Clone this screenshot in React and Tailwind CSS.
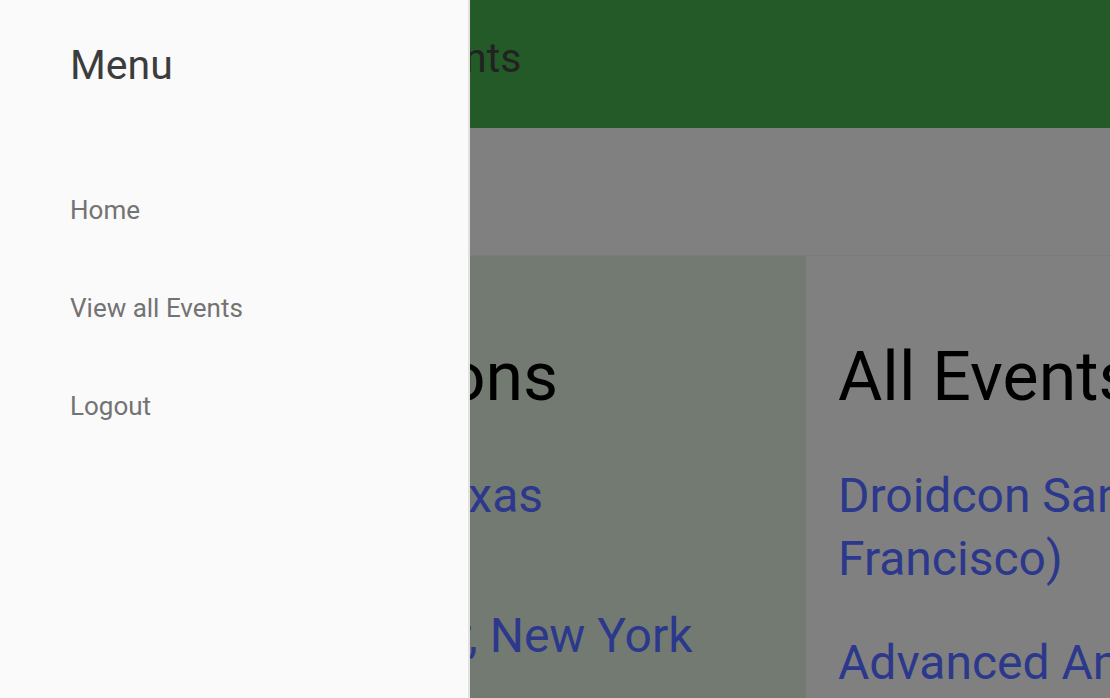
import React from 'react';

const font = { fontFamily: 'Roboto, "Noto Sans", sans-serif' };

function Drawer() {
  return (
    <aside className="absolute inset-y-0 left-0 z-20 w-[470px] bg-[#fafafa] border-r-2 border-[#e2e2e2]">
      <h2 className="pl-[70px] pt-[39px] text-[41px] leading-[52px] text-[#3c3c3c]">Menu</h2>
      <nav className="mt-[102px] flex flex-col gap-[64px] pl-[70px] text-[26px] leading-[34px] text-[#737373]">
        <a>Home</a>
        <a>View all Events</a>
        <a>Logout</a>
      </nav>
    </aside>
  );
}

export default function App() {
  return (
    <div className="relative h-[698px] w-[1110px] overflow-hidden bg-[#808080]" style={font}>
      <header className="h-[128px] bg-[#235a27] pl-[400px] pt-[32px]">
        <h1 className="text-[41px] leading-[52px] text-[#222]">Events</h1>
      </header>
      <div className="h-[128px] border-b border-[#7a7a7a] bg-[#808080]" />
      <main className="flex h-[442px]">
        <section className="w-[806px] shrink-0 bg-[#727a72] pl-[260px] pt-[81px] whitespace-nowrap">
          <h2 className="text-[68px] leading-[80px] text-black">Locations</h2>
          <ul className="mt-[47px] flex flex-col gap-[77px] text-[48px] leading-[63px] text-[#2c388c]">
            <li>Austin, Texas</li>
            <li className="-ml-[5px]">Rochester, New York</li>
          </ul>
        </section>
        <section className="flex-1 bg-[#808080] pl-[32px] pt-[81px] whitespace-nowrap">
          <h2 className="text-[68px] leading-[80px] text-black">All Events</h2>
          <ul className="mt-[47px] flex flex-col gap-[41px] text-[48px] leading-[63px] text-[#2c388c]">
            <li>Droidcon San<br />Francisco)</li>
            <li>Advanced Android</li>
          </ul>
        </section>
      </main>
      <Drawer />
    </div>
  );
}
